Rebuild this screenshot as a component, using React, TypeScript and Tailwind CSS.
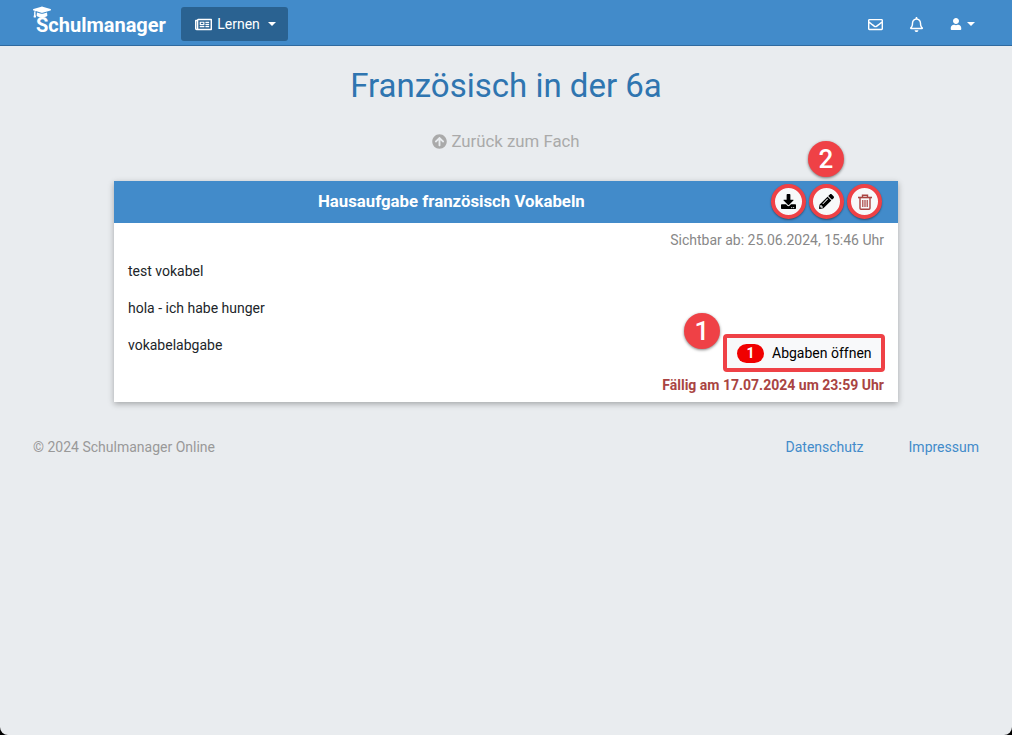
import { FaRegEnvelope, FaRegBell, FaUser, FaRegNewspaper, FaArrowCircleUp, FaDownload, FaPencilAlt, FaGraduationCap } from "react-icons/fa";

function CircleBtn({ children, cls }: { children: React.ReactNode; cls: string }) {
  return (
    <div className={`w-[35px] h-[35px] rounded-full border-[4px] border-[#ef4146] bg-[#f8f9fa] flex items-center justify-center shadow-[0_1px_2px_rgba(0,0,0,0.4)] ${cls}`}>
      {children}
    </div>
  );
}

function Num({ n, cls }: { n: string; cls: string }) {
  return (
    <div className={`absolute w-[36px] h-[36px] rounded-full bg-[#ef4146] text-white flex items-center justify-center text-[26px] font-medium leading-none shadow-[0_1px_3px_rgba(0,0,0,0.5)] ${cls}`}>
      {n}
    </div>
  );
}

export default function App() {
  return (
    <div className="w-[1012px] h-[735px] bg-black overflow-hidden font-['Roboto',sans-serif]">
      <div className="h-full bg-[#e9ecef] rounded-b-[8px] overflow-hidden flex flex-col">
        <nav className="h-[46px] shrink-0 bg-[#428bca] border-b border-[#2f6a9f] flex items-center text-white">
          <div className="relative ml-[36px] w-[145px] mt-[1px]">
            <FaGraduationCap className="absolute left-[-3px] top-[-9px] text-[18px]" />
            <span className="text-[20px] font-bold leading-none block pt-[3px]">Schulmanager</span>
          </div>
          <div className="w-[107px] h-[34px] mt-[3px] pl-[2px] bg-[#2a6291] rounded-[3px] flex items-center justify-center gap-[5px] text-[14px]">
            <FaRegNewspaper className="text-[17px]" />
            <span>Lernen</span>
            <span className="ml-[3px] w-0 h-0 border-x-[4px] border-x-transparent border-t-[4px] border-t-white" />
          </div>
          <div className="ml-auto flex items-center mt-[3px]">
            <FaRegEnvelope className="text-[15px]" />
            <FaRegBell className="text-[15px] ml-[26px]" />
            <FaUser className="text-[12px] ml-[26px]" />
            <span className="ml-[5px] w-0 h-0 border-x-[4px] border-x-transparent border-t-[4px] border-t-white mr-[37px]" />
          </div>
        </nav>

        <h1 className="mt-[21px] text-center text-[33px] leading-[38px] text-[#2f75b0] font-normal">Französisch in der 6a</h1>

        <div className="mt-[24px] flex items-center justify-center gap-[4px] text-[16.8px] leading-[24px] text-[#aaaaaa]">
          <FaArrowCircleUp className="text-[15px]" />
          <span>Zurück zum Fach</span>
        </div>

        <div className="relative mt-[28px] mx-[114px] w-[784px] h-[221px] bg-white shadow-[0_2px_6px_rgba(0,0,0,0.3)] flex flex-col">
          <div className="relative h-[42px] bg-[#428bca] flex items-center pl-[204px] text-white text-[16.8px] font-bold">
            <span>Hausaufgabe französisch Vokabeln</span>
            <div className="absolute right-[16px] top-[3px] flex gap-[3px]">
              <CircleBtn cls="text-black"><FaDownload className="text-[15px]" /></CircleBtn>
              <CircleBtn cls="text-black"><FaPencilAlt className="text-[15px]" /></CircleBtn>
              <CircleBtn cls="text-[#a94442]">
                <svg width="14" height="16" viewBox="0 0 14 16" fill="none" stroke="currentColor">
                  <path d="M0 3.5h14" strokeWidth="1.6" />
                  <path d="M4.5 3V1.2h5V3" strokeWidth="1.4" />
                  <path d="M2 4v10.2q0 1 1 1h8q1 0 1-1V4" strokeWidth="1.4" />
                  <path d="M4.8 6v7M7 6v7M9.2 6v7" strokeWidth="1.2" />
                </svg>
              </CircleBtn>
            </div>
          </div>
          <div className="flex-1 px-[14px] relative text-[14px] leading-[20px] text-[#212529]">
            <div className="text-right text-[#888888] mt-[7px]">Sichtbar ab: 25.06.2024, 15:46 Uhr</div>
            <p className="mt-[11px]">test vokabel</p>
            <p className="mt-[17px]">hola - ich habe hunger</p>
            <p className="mt-[17px]">vokabelabgabe</p>
            <div className="absolute right-[13px] top-[111px] w-[162px] h-[38px] rounded-[4px] border-[4px] border-[#ef4146] bg-[#f8f9fa] flex items-center pl-[10px] text-black">
              <span className="w-[27px] h-[19px] rounded-full bg-[#f00000] text-white font-bold text-[14px] flex items-center justify-center">1</span>
              <span className="ml-[8px]">Abgaben öffnen</span>
            </div>
            <div className="absolute right-[14px] top-[152px] font-bold text-[#a94442]">Fällig am 17.07.2024 um 23:59 Uhr</div>
          </div>
          <Num n="2" cls="right-[54px] top-[-40px]" />
          <Num n="1" cls="right-[178px] top-[132px]" />
        </div>

        <div className="mt-[35px] px-[33px] flex text-[14px] leading-[20px]">
          <span className="text-[#999999]">© 2024 Schulmanager Online</span>
          <a className="ml-auto text-[#428bca]">Datenschutz</a>
          <a className="ml-[45px] text-[#428bca]">Impressum</a>
        </div>
      </div>
    </div>
  );
}
